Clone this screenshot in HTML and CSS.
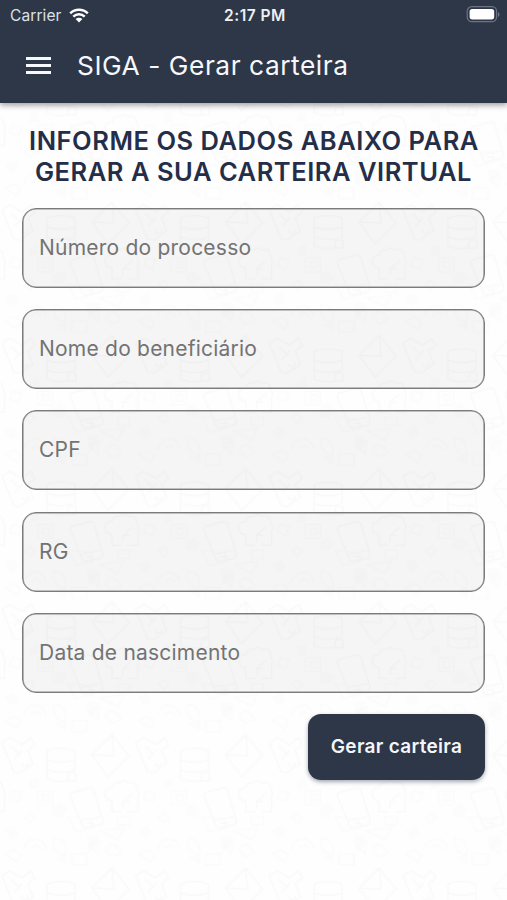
FILE: index.html
```html
<!DOCTYPE html>
<html lang="pt-BR">
<head>
<meta charset="utf-8">
<meta name="viewport" content="width=device-width, initial-scale=1">
<title>SIGA - Gerar carteira</title>
<link rel="stylesheet" href="styles.css">
</head>
<body>
<header class="header">
  <div class="status">
    <div class="status-left">
      <span class="carrier">Carrier</span>
      <svg class="wifi" viewBox="0 0 20 15" aria-hidden="true">
        <path d="M1.2 5.3a12.6 12.6 0 0 1 17.6 0M4.3 8.6a8.2 8.2 0 0 1 11.4 0" fill="none" stroke="#fff" stroke-width="2.5"/>
        <path d="M6.6 11a4.9 4.9 0 0 1 6.8 0L10 14.5z" fill="#fff"/>
      </svg>
    </div>
    <time class="clock">2:17 PM</time>
    <svg class="battery" viewBox="0 0 34 17" aria-hidden="true">
      <rect x="1.2" y=".7" width="29.4" height="15" rx="4.6" fill="none" stroke="#6c7481" stroke-width="1.2"/>
      <rect x="3.6" y="3" width="24.6" height="10.4" rx="2.6" fill="#fff"/>
      <path d="M32 6v5q1.5-.6 1.5-2.5T32 6z" fill="#6c7481"/>
    </svg>
  </div>
  <div class="toolbar">
    <button class="menu" aria-label="Menu"><span></span><span></span><span></span></button>
    <h1 class="title">SIGA - Gerar carteira</h1>
  </div>
</header>
<svg class="doodles" aria-hidden="true">
  <defs>
    <g id="cloud"><path d="M112 78v-10q-7 0-7-7 0-6 7-6 1-6 8-5 4-4 8 0 9-2 9 7 3 3 1 8v14h-9m-8 0h-9M123 69l9-8m-9 8v6m0-6h6"/></g>
    <pattern id="doodle" x="0" y="200" width="133.6" height="133.2" patternUnits="userSpaceOnUse">
      <g fill="none" stroke="#000" stroke-width="1.2" stroke-linejoin="round" stroke-linecap="round">
        <path d="M47 18q14-5 28 0v9q-14 5-28 0zM47 27v10q14 5 28 0V27M47 37v9q10 4 19 2M69 40h7v8h-9z"/>
        <path d="M92 22l20-20 17 21-21 21zM92 22l22 1-2-21"/>
        <path d="M2 10l8-5 12 7 9-7 4 7-7 6 5 13-13 9-6-1zM12 14l8 8m-5 4l7-8m0 13a3 3 0 1 0 6-1"/>
        <path d="M71 60l19-5q3 0 4 3l9 30q0 3-3 4l-14 3q-3 0-4-3L70 63zM81 88l19-4M87 90h6v4"/>
        <use href="#cloud"/><use href="#cloud" x="-133.6"/>
      </g>
      <g fill="none" stroke="#000" stroke-width="1.2" stroke-linejoin="round" opacity=".55">
        <path d="M38 58h15v14H38zM43 62h6v6h-6zM13 58l9 2-3 9-9-3zM30 80l5 5-5 5-5-5z"/>
        <path d="M68 84l23 2 2 9-17 4zM100 98l24-3-6 12zM118 84h12v8h-12z"/>
        <path d="M24 116q3-12 15-10 7 4 7 10m-14 0q5-7 9 0M54 105q13 0 12 17-14-1-12-17z"/>
        <path d="M72 121h15v11H72zM89 112l11-5-2 14zM106 118q2-9 10-5l5 7-9 4zM5 121l9-4 7 5-4 7z"/>
      </g>
      <path fill="#000" opacity=".4" d="M52 76l8-5 7 6-5 7-9-1zM87 103h11v11l-9 4zM30 48l8-3 1 9-9 2zM5 98l9-5 4 8-7 5zM55 125l11-4v10z"/>
    </pattern>
  </defs>
  <rect width="100%" height="100%" fill="url(#doodle)"/>
</svg>
<main class="content">
  <h2 class="heading">INFORME OS DADOS ABAIXO PARA GERAR A SUA CARTEIRA VIRTUAL</h2>
  <form class="form">
    <label class="field">Número do processo</label>
    <label class="field">Nome do beneficiário</label>
    <label class="field">CPF</label>
    <label class="field">RG</label>
    <label class="field">Data de nascimento</label>
    <button class="submit" type="button">Gerar carteira</button>
  </form>
</main>
</body>
</html>
```
FILE: styles.css
```css
* { box-sizing: border-box; }
body {
  margin: 0;
  min-height: 900px;
  background: #fefefe;
  font-family: Inter, "Liberation Sans", sans-serif;
}
.header {
  position: relative;
  z-index: 2;
  height: 103px;
  background: #2d3748;
  color: #fff;
  box-shadow: 0 2px 6px rgba(0, 0, 0, .4);
}
.status {
  display: grid;
  grid-template-columns: 1fr auto 1fr;
  align-items: center;
  height: 30px;
  padding: 0 7px 0 10px;
}
.status-left { display: flex; align-items: center; gap: 7px; }
.carrier { font-size: 15.5px; color: #dde1e7; letter-spacing: .1px; }
.wifi { width: 20px; height: 15px; }
.clock { font-size: 15.5px; font-weight: 600; color: #edf0f4; letter-spacing: .5px; }
.battery { justify-self: end; width: 34px; height: 17px; margin-bottom: 2px; }
.toolbar {
  display: flex;
  align-items: center;
  gap: 26px;
  height: 71px;
  padding-left: 26px;
}
.menu {
  display: flex;
  flex-direction: column;
  gap: 4px;
  width: 25px;
  padding: 0;
  border: 0;
  background: none;
}
.menu span { height: 3px; background: #f6f8fc; }
.title { margin: 0; font-size: 26.3px; font-weight: 400; letter-spacing: .55px; color: #f6f8fc; }
.doodles {
  position: absolute;
  inset: 0;
  width: 100%;
  height: 900px;
  opacity: .016;
}
.content { position: relative; padding: 22px 22px 0; }
.heading {
  margin: 0 -10px;
  color: #252e48;
  font-size: 25.5px;
  line-height: 31px;
  font-weight: 600;
  letter-spacing: .53px;
  text-indent: 1px;
  text-align: center;
}
.form { display: flex; flex-direction: column; gap: 21.2px; margin-top: 21px; }
.field {
  display: flex;
  align-items: center;
  height: 80px;
  padding: 0 16px 1px;
  border: 1px solid #7b7b7b;
  border-radius: 14px;
  background: rgba(0, 0, 0, .037);
  box-shadow: inset 0 0 0 .6px #8a8a8a;
  color: #737373;
  font-size: 21px;
  letter-spacing: .22px;
}
.submit {
  align-self: flex-end;
  width: 177px;
  height: 66px;
  padding: 0;
  border: 0;
  border-radius: 13px;
  background: #2d3748;
  color: #f3f6fb;
  font: 600 19px Inter, "Liberation Sans", sans-serif;
  letter-spacing: .3px;
  box-shadow: 0 2px 4px rgba(30, 45, 70, .4);
}
```
